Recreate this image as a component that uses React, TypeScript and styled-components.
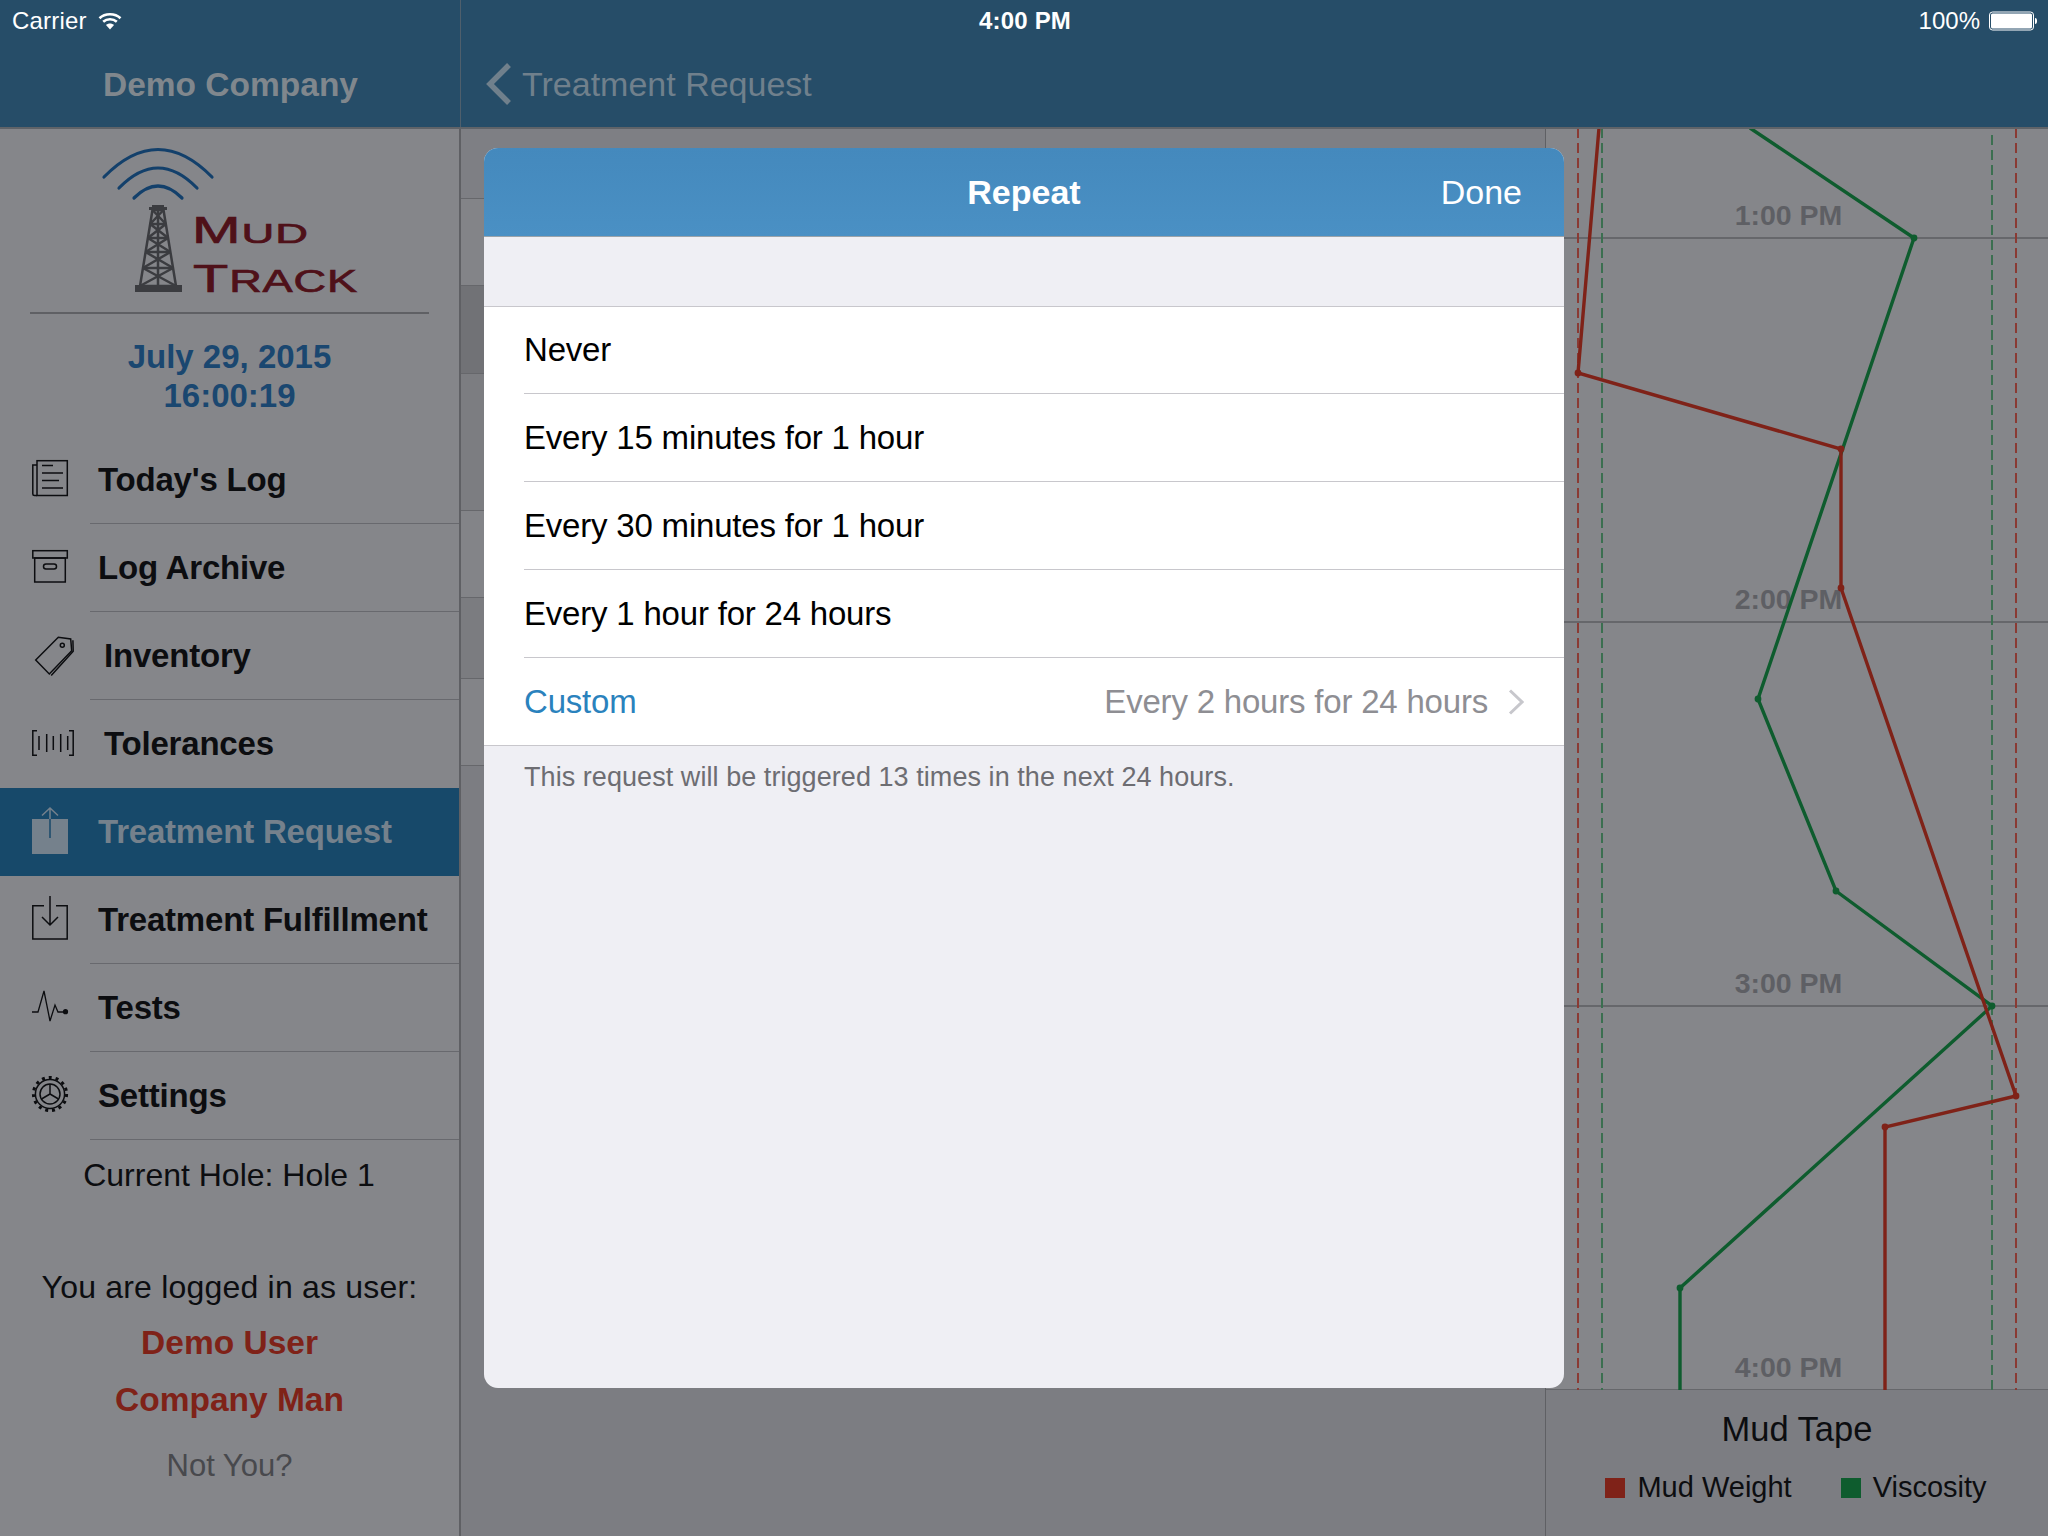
import styled, { createGlobalStyle } from 'styled-components';

const GlobalStyle = createGlobalStyle`
  html, body {
    margin: 0;
    padding: 0;
    background: #85868a;
  }
  * {
    box-sizing: border-box;
  }
`;

const FONT = `"Liberation Sans", Arial, sans-serif`;

const NAV_ITEMS = [
  { label: "Today's Log", icon: 'log' },
  { label: 'Log Archive', icon: 'archive' },
  { label: 'Inventory', icon: 'tag', inset: true },
  { label: 'Tolerances', icon: 'barcode', inset: true, plain: true },
  { label: 'Treatment Request', icon: 'request', active: true, plain: true },
  { label: 'Treatment Fulfillment', icon: 'fulfil' },
  { label: 'Tests', icon: 'pulse' },
  { label: 'Settings', icon: 'gear' },
];

const REPEAT_OPTIONS = [
  'Never',
  'Every 15 minutes for 1 hour',
  'Every 30 minutes for 1 hour',
  'Every 1 hour for 24 hours',
];

// rows of the list that shows on both sides of the sheet
const BACK_ROWS = [
  { height: 70, tone: '#7e7f84' },
  { height: 87, tone: '#838488' },
  { height: 88, tone: '#717276' },
  { height: 137, tone: '#7c7d81' },
  { height: 87, tone: '#838488' },
  { height: 81, tone: '#7b7c80' },
  { height: 87, tone: '#838488' },
];

const GREEN_POINTS = [
  [1750, 128],
  [1914, 238],
  [1758, 699],
  [1836, 891],
  [1992, 1006],
  [1680, 1288],
  [1680, 1392],
];

const RED_POINTS = [
  [1599, 128],
  [1578, 373],
  [1841, 449],
  [1841, 588],
  [2016, 1096],
  [1885, 1127],
  [1885, 1392],
];

const HOURS = [
  { label: '1:00 PM', y: 238 },
  { label: '2:00 PM', y: 622 },
  { label: '3:00 PM', y: 1006 },
  { label: '4:00 PM', y: 1390 },
];

const Page = styled.div`
  position: relative;
  width: 2048px;
  height: 1536px;
  overflow: hidden;
  font-family: ${FONT};
  background: #85868a;
`;

const Header = styled.header`
  position: relative;
  height: 129px;
  background: #264d68;
  border-bottom: 2px solid #5f6368;

  &::before {
    content: '';
    position: absolute;
    top: 0;
    bottom: 0;
    left: 460px;
    width: 1px;
    background: #4f5f6c;
  }
`;

const StatusBar = styled.div`
  display: grid;
  grid-template-columns: 1fr auto 1fr;
  align-items: center;
  height: 41px;
  padding: 1px 10px 0 12px;
  color: #fff;
  font-size: 24px;
`;

const StatusLeft = styled.div`
  display: flex;
  align-items: center;
  gap: 11px;
  letter-spacing: 0.2px;
`;

const StatusTime = styled.div`
  font-weight: 700;
  letter-spacing: 0.2px;
`;

const StatusRight = styled.div`
  display: flex;
  align-items: center;
  justify-content: flex-end;
  gap: 9px;
`;

const NavBar = styled.div`
  display: grid;
  grid-template-columns: 461px 1fr;
  align-items: center;
  height: 86px;
`;

const NavTitle = styled.div`
  padding-top: 2px;
  text-align: center;
  color: #80878d;
  font-size: 33.5px;
  font-weight: 700;
`;

const BackLink = styled.div`
  display: flex;
  align-items: center;
  gap: 10px;
  padding-left: 25px;
  color: #70808c;
  font-size: 34px;
`;

const Body = styled.div`
  display: flex;
  height: 1407px;
`;

const Sidebar = styled.aside`
  display: flex;
  flex-direction: column;
  width: 461px;
  flex: none;
  border-right: 2px solid #5f6064;
  background: #85868a;
`;

const LogoBlock = styled.div`
  height: 183px;
  padding: 16px 0 0 100px;
`;

const LogoMark = styled.svg`
  display: block;
  width: 270px;
  height: 150px;
  overflow: visible;
`;

const LogoText = styled.text`
  font-family: ${FONT};
  fill: #4f1119;
  stroke: #4f1119;
  stroke-width: 0.7px;
  letter-spacing: 0.6px;
`;

const Rule = styled.div`
  height: 2px;
  margin: 0 30px;
  background: #5f6064;
`;

const DateBlock = styled.div`
  height: 122px;
  padding-top: 23px;
  text-align: center;
  color: #1a4770;
  font-size: 33px;
  line-height: 39px;
  font-weight: 700;
`;

const NavList = styled.nav`
  display: flex;
  flex-direction: column;
`;

const NavRow = styled.div<{ $active?: boolean; $plain?: boolean }>`
  position: relative;
  display: flex;
  align-items: center;
  height: 88px;
  padding-left: 32px;
  background: ${(p) => (p.$active ? '#17496a' : 'transparent')};
  color: ${(p) => (p.$active ? '#75818c' : '#0c0d10')};

  &::after {
    content: '';
    display: ${(p) => (p.$plain ? 'none' : 'block')};
    position: absolute;
    left: 90px;
    right: 0;
    bottom: 0;
    height: 1px;
    background: #68696e;
  }
`;

const NavIcon = styled.svg`
  width: 44px;
  height: 44px;
  flex: none;
  overflow: visible;
  fill: none;
  stroke: currentColor;
  stroke-width: 1.5;
`;

const NavLabel = styled.span<{ $inset?: boolean }>`
  margin-left: ${(p) => (p.$inset ? '28px' : '22px')};
  font-size: 33px;
  font-weight: 700;
  letter-spacing: -0.2px;
`;

const UserBlock = styled.div`
  display: flex;
  flex-direction: column;
  align-items: center;
`;

const HoleLine = styled.div`
  height: 70px;
  margin-bottom: 49px;
  padding-right: 1px;
  color: #0c0d10;
  font-size: 32px;
  line-height: 71px;
`;

const UserLine = styled.div<{ $height: number }>`
  height: ${(p) => p.$height}px;
  color: #0c0d10;
  font-size: 32px;
  letter-spacing: 0.2px;
  line-height: ${(p) => p.$height}px;
`;

const UserName = styled.div<{ $height: number }>`
  height: ${(p) => p.$height}px;
  color: #7f2218;
  font-size: 33.5px;
  font-weight: 700;
  line-height: ${(p) => p.$height}px;
`;

const NotYou = styled.div`
  margin-top: 10px;
  height: 56px;
  color: #48494d;
  font-size: 31px;
  line-height: 56px;
`;

const BackList = styled.main`
  flex: 1;
  display: flex;
  flex-direction: column;
  border-right: 1px solid #5f6064;
  background: #7c7d82;
`;

const BackRow = styled.div<{ $height: number; $tone: string }>`
  height: ${(p) => p.$height}px;
  background: ${(p) => p.$tone};
  border-bottom: 1px solid #66676b;
`;

const ChartPanel = styled.section`
  display: flex;
  flex-direction: column;
  width: 502px;
  flex: none;
`;

const ChartCanvas = styled.svg`
  display: block;
  flex: none;
  width: 502px;
  height: 1261px;
`;

const HourLabel = styled.text`
  font-family: ${FONT};
  font-size: 28.5px;
  font-weight: 700;
  fill: #5e5f64;
  text-anchor: middle;
`;

const LegendPanel = styled.div`
  flex: 1;
  display: flex;
  flex-direction: column;
  align-items: center;
  background: #7c7d82;
  color: #0c0d10;
`;

const LegendTitle = styled.div`
  height: 81px;
  font-size: 34.5px;
  line-height: 78px;
`;

const LegendItems = styled.div`
  display: flex;
  align-items: center;
  gap: 49px;
  padding-right: 2px;
  font-size: 29px;
`;

const LegendItem = styled.div`
  display: flex;
  align-items: center;
  gap: 12px;
`;

const Swatch = styled.span<{ $color: string }>`
  width: 20px;
  height: 20px;
  background: ${(p) => p.$color};
`;

const Sheet = styled.div`
  position: absolute;
  left: 484px;
  top: 148px;
  display: flex;
  flex-direction: column;
  width: 1080px;
  height: 1240px;
  overflow: hidden;
  border-radius: 14px;
  background: #efeff4;
`;

const SheetHeader = styled.div`
  display: grid;
  grid-template-columns: 1fr auto 1fr;
  align-items: center;
  height: 89px;
  flex: none;
  padding: 0 42px;
  color: #fff;
  background: linear-gradient(#4489bd, #4a90c4);
  border-bottom: 1px solid #9aa3aa;
`;

const SheetTitle = styled.div`
  grid-column: 2;
  font-size: 34px;
  font-weight: 700;
`;

const DoneButton = styled.div`
  justify-self: end;
  font-size: 34px;
`;

const OptionGroup = styled.div`
  margin-top: 69px;
  background: #fff;
  border-top: 1px solid #c8c7cc;
  border-bottom: 1px solid #c8c7cc;
`;

const OptionRow = styled.div<{ $last?: boolean; $first?: boolean }>`
  display: flex;
  align-items: center;
  justify-content: space-between;
  height: ${(p) => (p.$last || p.$first ? '87px' : '88px')};
  margin-left: 40px;
  padding-right: 40px;
  color: #000;
  font-size: 33px;
  letter-spacing: -0.2px;
  border-bottom: ${(p) => (p.$last ? 'none' : '1px solid #c8c7cc')};
`;

const CustomLabel = styled.span`
  color: #2a82bd;
`;

const CustomValue = styled.span`
  display: flex;
  align-items: center;
  gap: 20px;
  color: #8e8e93;
`;

const GroupFooter = styled.div`
  padding: 15px 40px 0;
  color: #6d6d72;
  font-size: 27px;
  letter-spacing: 0.06px;
  line-height: 32px;
`;

function Wifi() {
  return (
    <svg width="24" height="18" viewBox="0 0 24 18">
      <g fill="none" stroke="#fff" strokeWidth="2.6">
        <path d="M1.5 6.2 C7 1 17 1 22.5 6.2" />
        <path d="M5.2 9.8 C9 6.3 15 6.3 18.8 9.8" />
      </g>
      <path d="M8 13 C10.4 11 13.6 11 16 13 L12 17.5 Z" fill="#fff" />
    </svg>
  );
}

function Battery() {
  return (
    <svg width="49" height="20" viewBox="0 0 49 20">
      <rect x="0.5" y="1" width="44" height="18" rx="3" fill="none" stroke="#fff" />
      <rect x="2" y="2.5" width="41" height="15" rx="1.5" fill="#fff" />
      <path d="M46 7 C47.5 7 48 8 48 10 C48 12 47.5 13 46 13 Z" fill="#fff" />
    </svg>
  );
}

function Logo() {
  const levels = [224, 238, 252, 268];
  const half = (y: number) => 5.5 + (y - 210) * 0.165;
  const rungs = [210, ...levels, 286];

  return (
    <LogoMark viewBox="100 145 270 150">
      <g fill="none" stroke="#13406b" strokeWidth="3.2" strokeLinecap="round">
        <path d="M104 177 Q158 122 212 177" />
        <path d="M119 188 Q158 148 197 188" />
        <path d="M134 198 Q158 174 182 198" />
      </g>
      <g fill="none" stroke="#3b3c40" strokeWidth="2.5">
        <path d="M152.5 210 L140 286 M163.5 210 L176 286 M158 210 V286" />
        {rungs.map((y) => (
          <path key={y} d={`M${158 - half(y)} ${y} H${158 + half(y)}`} />
        ))}
        {rungs.slice(0, -1).map((y, i) => {
          const next = rungs[i + 1];
          return (
            <path
              key={y}
              d={`M${158 - half(y)} ${y} L${158 + half(next)} ${next} M${158 + half(y)} ${y} L${158 - half(next)} ${next}`}
            />
          );
        })}
      </g>
      <rect x="135" y="285" width="47" height="7" fill="#3b3c40" />
      <rect x="149" y="207" width="18" height="3" fill="#3b3c40" />
      <rect x="152" y="205" width="12" height="2" fill="#3b3c40" />
      <LogoText transform="translate(192 243) scale(1.62 1)" fontSize="36">
        M<tspan fontSize="28">UD</tspan>
      </LogoText>
      <LogoText transform="translate(193 292) scale(1.48 1)" fontSize="39">
        T<tspan fontSize="30.5">RACK</tspan>
      </LogoText>
    </LogoMark>
  );
}

function MenuIcon({ name }: { name: string }) {
  switch (name) {
    case 'log':
      return (
        <NavIcon viewBox="0 0 44 44">
          <rect x="5" y="2.7" width="30.3" height="34.8" />
          <path d="M5 7 H.8 V36 Q.8 37.5 2.5 37.5 H5" />
          <path d="M10 7.5 H21 M10 15 H31 M10 22.5 H27 M10 30 H31" />
        </NavIcon>
      );
    case 'archive':
      return (
        <NavIcon viewBox="0 0 44 44">
          <rect x=".8" y="4.7" width="34.5" height="7.3" />
          <rect x="2.7" y="12" width="30.6" height="24" />
          <rect x="11.5" y="18" width="13" height="5" rx="2.5" />
        </NavIcon>
      );
    case 'tag':
      return (
        <NavIcon viewBox="0 0 44 44">
          <path d="M3.7 26 L26.3 3.3 L38.7 5 L39.7 16.7 L17.3 40 Z" />
          <path d="M40.9 6.2 L41.2 17.2 L19.2 41.6" />
          <circle cx="30.3" cy="11.2" r="2" />
        </NavIcon>
      );
    case 'barcode':
      return (
        <NavIcon viewBox="0 0 44 44">
          <path d="M5 8.7 H.8 V33.3 H5 M37 8.7 H41.2 V33.3 H37" />
          <path d="M7 14 V28 M14.7 12 V30 M21.3 14 V28 M28.7 12 V30 M35.7 14 V28" />
        </NavIcon>
      );
    case 'request':
      return (
        <NavIcon viewBox="0 0 44 44">
          <rect x="0" y="9" width="36" height="35" fill="currentColor" stroke="none" />
          <path d="M10 5.5 L18 -2 L26 5.5 M18 -2 V9" />
          <path d="M18 9 V28" stroke="#17496a" />
        </NavIcon>
      );
    case 'fulfil':
      return (
        <NavIcon viewBox="0 0 44 44">
          <path d="M12 7.7 H.8 V41 H35.2 V7.7 H24" />
          <path d="M18 -2 V27 M10 19 L18 27 L26 19" />
        </NavIcon>
      );
    case 'pulse':
      return (
        <NavIcon viewBox="0 0 44 44">
          <path d="M0 26 H6 L12 5 L18 35 L23 19 L26 26 H33" strokeWidth="1.3" />
          <circle cx="33.5" cy="25.7" r="2.6" fill="currentColor" stroke="none" />
        </NavIcon>
      );
    default:
      return (
        <NavIcon viewBox="0 0 44 44">
          <circle cx="18" cy="20" r="16.6" strokeWidth="3" strokeDasharray="3 3.95" />
          <circle cx="18" cy="20" r="14.6" />
          <circle cx="18" cy="20" r="10" />
          <path d="M18 20 V10 M18 20 L9.5 25 M18 20 L26.5 25" />
        </NavIcon>
      );
  }
}

function Chart() {
  const toPath = (pts: number[][]) => pts.map(([x, y]) => `${x},${y}`).join(' ');
  const dashed = [
    { x: 1578, color: '#8a3a33', start: 128 },
    { x: 1602, color: '#3b6f50', start: 128 },
    { x: 1992, color: '#3b6f50', start: 135 },
    { x: 2016, color: '#8a3a33', start: 128 },
  ];

  return (
    <ChartCanvas viewBox="1546 129 502 1261">
      {HOURS.map((h) => (
        <g key={h.label}>
          <line x1="1546" x2="2048" y1={h.y} y2={h.y} stroke="#66676b" strokeWidth="2" />
          <HourLabel x="1788.5" y={h.y - 13}>
            {h.label}
          </HourLabel>
        </g>
      ))}
      {dashed.map((d) => (
        <line
          key={d.x}
          x1={d.x}
          x2={d.x}
          y1={d.start}
          y2="1390"
          stroke={d.color}
          strokeWidth="2"
          strokeDasharray="10 5"
        />
      ))}
      <polyline points={toPath(GREEN_POINTS)} fill="none" stroke="#0e5c2e" strokeWidth="3.4" />
      <polyline points={toPath(RED_POINTS)} fill="none" stroke="#7f2218" strokeWidth="3.4" />
      {GREEN_POINTS.slice(1, 6).map(([x, y]) => (
        <circle key={`${x}-${y}`} cx={x} cy={y} r="3.4" fill="#0e5c2e" />
      ))}
      {RED_POINTS.slice(1, 6).map(([x, y]) => (
        <circle key={`${x}-${y}`} cx={x} cy={y} r="3.4" fill="#7f2218" />
      ))}
    </ChartCanvas>
  );
}

export default function App() {
  return (
    <Page>
      <GlobalStyle />
      <Header>
        <StatusBar>
          <StatusLeft>
            Carrier
            <Wifi />
          </StatusLeft>
          <StatusTime>4:00 PM</StatusTime>
          <StatusRight>
            100%
            <Battery />
          </StatusRight>
        </StatusBar>
        <NavBar>
          <NavTitle>Demo Company</NavTitle>
          <BackLink>
            <svg width="26" height="44" viewBox="0 0 26 44">
              <path d="M23 3 L4 22 L23 41" fill="none" stroke="#70808c" strokeWidth="5.5" />
            </svg>
            Treatment Request
          </BackLink>
        </NavBar>
      </Header>
      <Body>
        <Sidebar>
          <LogoBlock>
            <Logo />
          </LogoBlock>
          <Rule />
          <DateBlock>
            July 29, 2015
            <br />
            16:00:19
          </DateBlock>
          <NavList>
            {NAV_ITEMS.map((item) => (
              <NavRow key={item.label} $active={item.active} $plain={item.plain}>
                <MenuIcon name={item.icon} />
                <NavLabel $inset={item.inset}>{item.label}</NavLabel>
              </NavRow>
            ))}
          </NavList>
          <UserBlock>
            <HoleLine>Current Hole: Hole 1</HoleLine>
            <UserLine $height={56}>You are logged in as user:</UserLine>
            <UserName $height={56}>Demo User</UserName>
            <UserName $height={57}>Company Man</UserName>
            <NotYou>Not You?</NotYou>
          </UserBlock>
        </Sidebar>
        <BackList>
          {BACK_ROWS.map((row, i) => (
            <BackRow key={i} $height={row.height} $tone={row.tone} />
          ))}
        </BackList>
        <ChartPanel>
          <Chart />
          <LegendPanel>
            <LegendTitle>Mud Tape</LegendTitle>
            <LegendItems>
              <LegendItem>
                <Swatch $color="#7f2218" />
                Mud Weight
              </LegendItem>
              <LegendItem>
                <Swatch $color="#0e5c2e" />
                Viscosity
              </LegendItem>
            </LegendItems>
          </LegendPanel>
        </ChartPanel>
      </Body>
      <Sheet>
        <SheetHeader>
          <SheetTitle>Repeat</SheetTitle>
          <DoneButton>Done</DoneButton>
        </SheetHeader>
        <OptionGroup>
          {REPEAT_OPTIONS.map((label, i) => (
            <OptionRow key={label} $first={i === 0}>
              {label}
            </OptionRow>
          ))}
          <OptionRow $last>
            <CustomLabel>Custom</CustomLabel>
            <CustomValue>
              Every 2 hours for 24 hours
              <svg width="16" height="26" viewBox="0 0 16 26">
                <path d="M2 1.5 L14 13 L2 24.5" fill="none" stroke="#c7c7cc" strokeWidth="3" />
              </svg>
            </CustomValue>
          </OptionRow>
        </OptionGroup>
        <GroupFooter>This request will be triggered 13 times in the next 24 hours.</GroupFooter>
      </Sheet>
    </Page>
  );
}
